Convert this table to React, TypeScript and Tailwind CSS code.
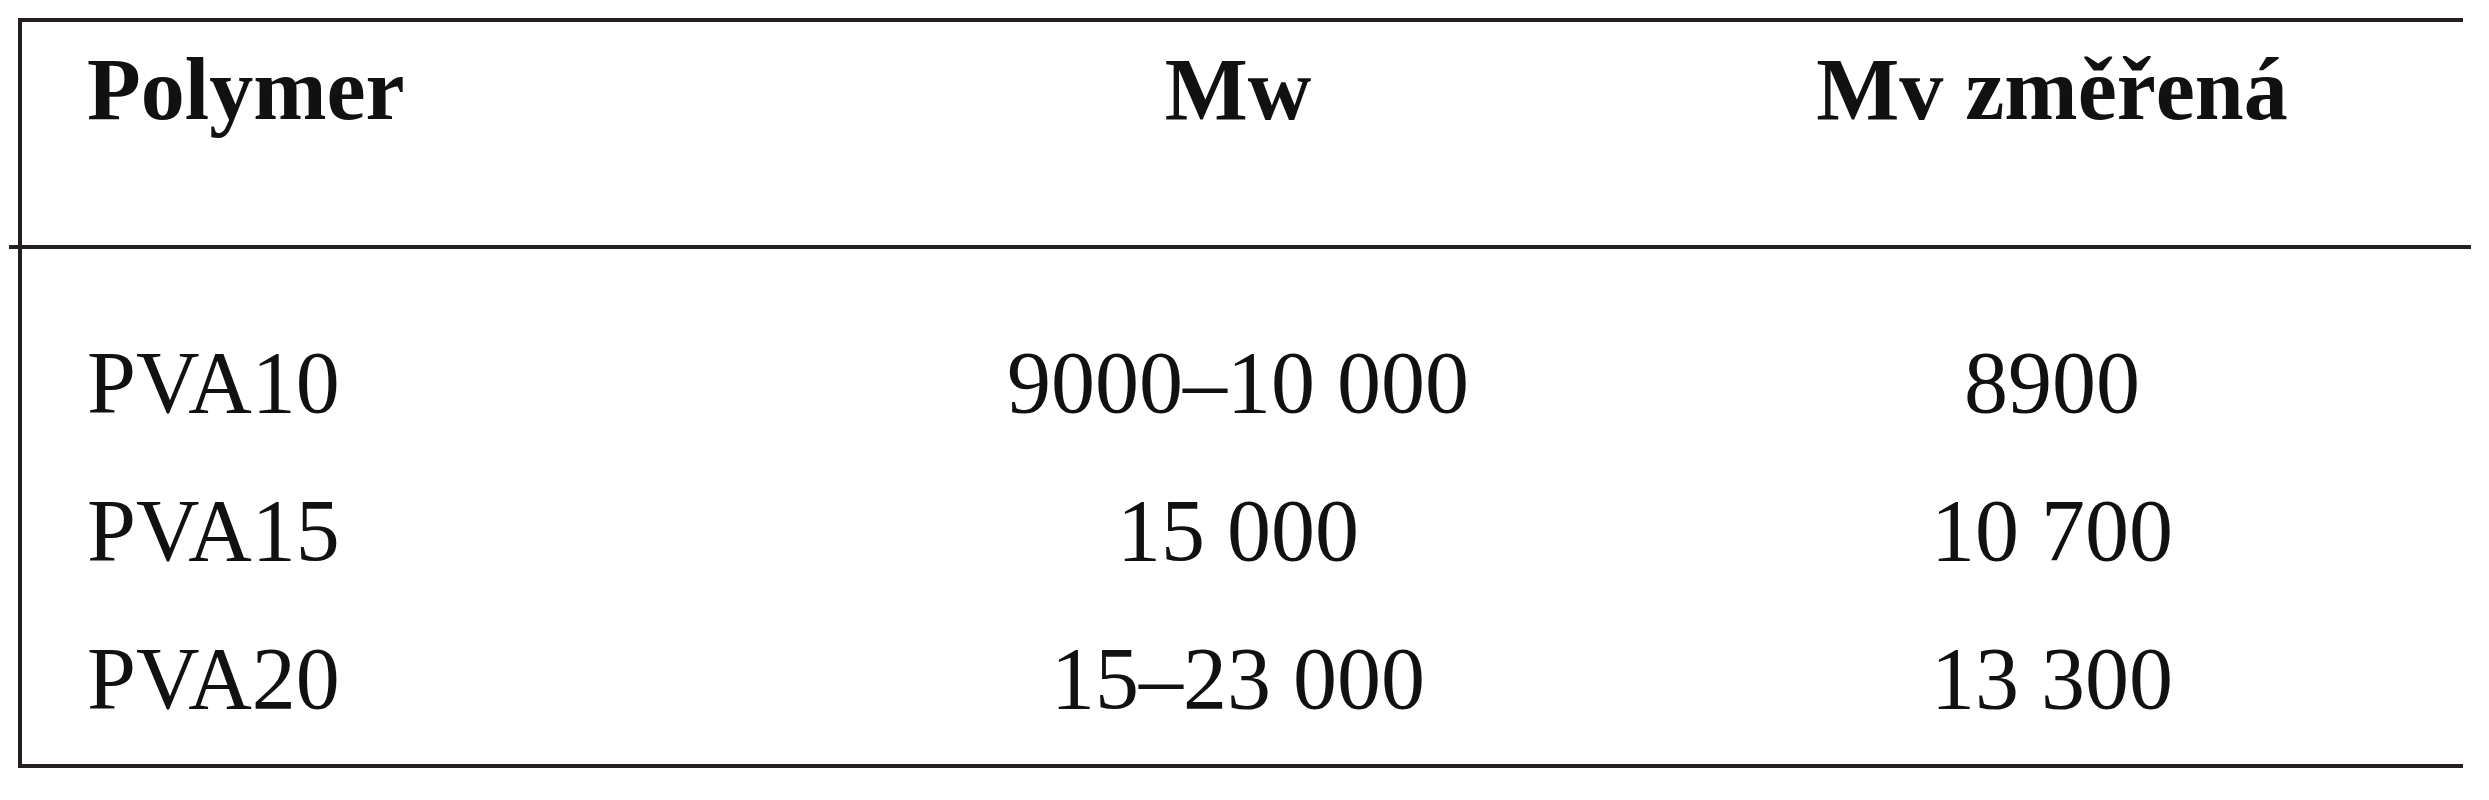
import React from 'react';

interface Row {
  polymer: string;
  mw: string;
  mv: string;
}

const rows: Row[] = [
  { polymer: 'PVA10', mw: '9000–10 000', mv: '8900' },
  { polymer: 'PVA15', mw: '15 000', mv: '10 700' },
  { polymer: 'PVA20', mw: '15–23 000', mv: '13 300' },
];

const App: React.FC = () => {
  return (
    <div
      className="w-[2489px] h-[800px] bg-white text-[#111] pt-[18px] pl-[18px]"
      style={{ fontFamily: '"Liberation Serif", "Times New Roman", serif' }}
    >
      <div className="w-[2445px] border-t-[4px] border-l-[4px] border-b-[4px] border-[#231f20] text-[88px] leading-[100px]">
        {/* Header */}
        <div className="grid grid-cols-[813px_806px_1fr] pt-[18px] pb-[105px] font-bold">
          <div className="pl-[65px]">Polymer</div>
          <div className="text-center">Mw</div>
          <div className="text-center">Mv změřená</div>
        </div>
        <div className="h-[4px] bg-[#231f20] -ml-[13px] w-[2462px]" />

        {/* Body */}
        <div className="pt-[84px] pb-[35px]">
          {rows.map((row) => (
            <div key={row.polymer} className="grid grid-cols-[813px_806px_1fr] h-[148px] last:h-[100px]">
              <div className="pl-[65px]">{row.polymer}</div>
              <div className="text-center">{row.mw}</div>
              <div className="text-center">{row.mv}</div>
            </div>
          ))}
        </div>
      </div>
    </div>
  );
};

export default App;
